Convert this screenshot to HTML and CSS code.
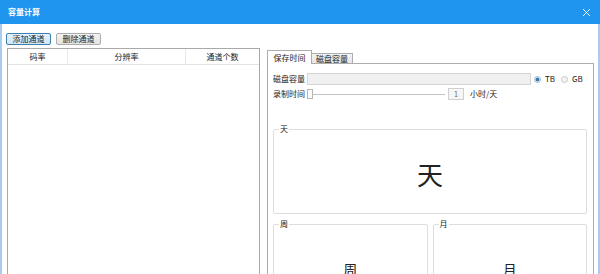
FILE: index.html
```html
<!DOCTYPE html>
<html lang="zh-CN">
<head>
    <meta charset="UTF-8">
    <title>容量计算</title>
    <link rel="stylesheet" href="styles.css">
</head>
<body>
    <div class="titlebar">
        <span class="title">容量计算</span>
        <svg class="close" width="9" height="9" viewBox="0 0 9 9">
            <path d="M1 1 L8 8 M8 1 L1 8" stroke="#fff" stroke-width="1" fill="none"/>
        </svg>
    </div>
    <div class="dialog-body">
        <div class="toolbar">
            <button class="btn btn-active">添加通道</button>
            <button class="btn">删除通道</button>
        </div>
        <div class="main">
            <!-- channel table -->
            <div class="table-panel">
                <div class="table-head">
                    <div class="col col-rate">码率</div>
                    <div class="col col-res">分辨率</div>
                    <div class="col col-count">通道个数</div>
                </div>
            </div>

            <!-- tab widget -->
            <div class="tabs">
                <div class="tabbar">
                    <div class="tab tab-active">保存时间</div>
                    <div class="tab">磁盘容量</div>
                </div>
                <div class="pane">
                    <div class="row">
                        <span class="label">磁盘容量</span>
                        <div class="field"></div>
                        <span class="radio radio-on"></span>
                        <span class="radio-text">TB</span>
                        <span class="radio"></span>
                        <span class="radio-text">GB</span>
                    </div>
                    <div class="row row-gap">
                        <span class="label">录制时间</span>
                        <span class="slider-handle"></span>
                        <span class="slider-track"></span>
                        <span class="spinbox">1</span>
                        <span class="unit">小时/天</span>
                    </div>

                    <fieldset class="group group-day">
                        <legend>天</legend>
                        <span class="big big-day">天</span>
                    </fieldset>

                    <div class="group-row">
                        <fieldset class="group">
                            <legend>周</legend>
                            <span class="big">周</span>
                        </fieldset>
                        <fieldset class="group">
                            <legend>月</legend>
                            <span class="big">月</span>
                        </fieldset>
                    </div>
                </div>
            </div>
        </div>
    </div>
</body>
</html>
```

FILE: styles.css
```css
/* global styles */
* {
    margin: 0;
    padding: 0;
    box-sizing: border-box;
}

body {
    width: 600px;
    height: 274px;
    overflow: hidden;
    background: #fff;
    color: #222;
    font-family: "Noto Sans CJK SC", "Liberation Sans", sans-serif;
    font-size: 8px;
    line-height: 10px;
}

/* title bar */
.titlebar {
    height: 24px;
    background: #1f95f0;
    color: #fff;
    display: flex;
    align-items: center;
    justify-content: space-between;
    padding: 0 9px 0 8px;
}

.title {
    font-weight: bold;
}

.dialog-body {
    height: 250px;
    border-left: 2px solid #a6cdee;
    border-right: 2px solid #a6cdee;
    padding: 9px 4px 0 4px;
    display: flex;
    flex-direction: column;
}

/* buttons */
.toolbar {
    display: flex;
    gap: 5px;
}

.btn {
    width: 45px;
    height: 12px;
    font: inherit;
    line-height: 10px;
    color: #222;
    border: 1px solid #acacac;
    border-radius: 2px;
    background: linear-gradient(#f2f2f2, #e4e4e4);
}

.btn-active {
    border-color: #3c7fb1;
    background: linear-gradient(#e6f1fb, #d2e6f7);
}

.main {
    flex: 1;
    display: flex;
    margin-top: 3px;
}

/* channel table */
.table-panel {
    width: 253px;
    margin-left: 1px;
    border: 1px solid #a9a9a9;
    border-bottom: none;
    background: #fff;
}

.table-head {
    display: flex;
    height: 16px;
    border-bottom: 1px solid #e3e3e3;
}

.col {
    display: flex;
    align-items: center;
    justify-content: center;
    border-right: 1px solid #e8e8e8;
}

.col-rate {
    width: 60px;
}

.col-res {
    width: 118px;
}

.col-count {
    flex: 1;
    border-right: none;
}

/* tab widget */
.tabs {
    flex: 1;
    margin-left: 7px;
    display: flex;
    flex-direction: column;
}

.tabbar {
    height: 15px;
    display: flex;
    align-items: flex-end;
}

.tab {
    width: 41px;
    height: 10px;
    display: flex;
    align-items: center;
    justify-content: center;
    border: 1px solid #adadad;
    border-left: none;
    border-bottom: none;
    background: linear-gradient(#f3f3f3, #e6e6e6);
}

.tab-active {
    width: 45px;
    height: 14px;
    margin-bottom: -1px;
    border-left: 1px solid #adadad;
    background: #fff;
    position: relative;
    z-index: 1;
}

.pane {
    flex: 1;
    border: 1px solid #adadad;
    border-bottom: none;
    background: #fff;
    padding: 9px 6px 0 5px;
}

.row {
    height: 12px;
    display: flex;
    align-items: center;
}

.row-gap {
    margin-top: 3px;
}

.label {
    width: 34px;
}

.field {
    width: 224px;
    height: 12px;
    background: #f0f0f0;
    border: 1px solid #d5d5d5;
}

.radio {
    width: 7px;
    height: 7px;
    margin-left: 3px;
    border-radius: 50%;
    border: 1px solid #c6c6c6;
    background: #f4f4f4;
}

.radio-on {
    background: radial-gradient(circle, #3b78a8 0 1.7px, #eaf2f9 2.2px);
    border-color: #9bb8cf;
}

.radio-text {
    margin-left: 4px;
    margin-right: 3px;
}

.slider-handle {
    width: 6px;
    height: 10px;
    border: 1px solid #b5b5b5;
    background: #fbfbfb;
}

.slider-track {
    width: 132px;
    height: 1px;
    background: #c3c3c3;
}

.spinbox {
    width: 16px;
    height: 12px;
    margin-left: 3px;
    border: 1px solid #cfcfcf;
    background: #f6f6f6;
    color: #777;
    display: flex;
    align-items: center;
    justify-content: center;
}

.unit {
    margin-left: 6px;
}

/* group boxes */
.group {
    height: 90px;
    border: 1px solid #dedede;
    border-radius: 2px;
    display: flex;
    align-items: center;
    justify-content: center;
    min-width: 0;
}

.group legend {
    margin-left: 5px;
    padding: 0 1px;
    line-height: 10px;
}

.group-day {
    margin-top: 24px;
}

.group-row {
    display: flex;
    gap: 5px;
    margin-top: 5px;
}

.group-row .group {
    flex: 1;
}

.big {
    font-size: 14px;
    line-height: 16px;
}

.big-day {
    font-size: 26px;
    line-height: 30px;
}
```
